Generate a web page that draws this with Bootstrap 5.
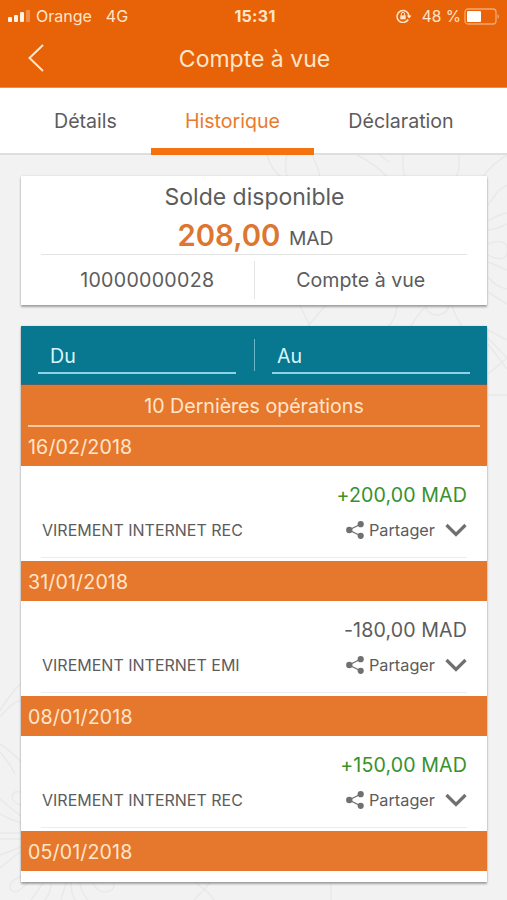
<!DOCTYPE html>
<html lang="fr">
<head>
<meta charset="utf-8">
<meta name="viewport" content="width=device-width, initial-scale=1">
<title>Compte à vue</title>
<link rel="stylesheet" href="https://cdn.jsdelivr.net/npm/bootstrap@5.3.0/dist/css/bootstrap.min.css">
<style>
body{font-family:Inter,"Liberation Sans",sans-serif;background:#f2f2f2;color:#5c5c5c;height:900px;overflow:hidden;font-size:19.6px;line-height:24px}
.backdrop{position:absolute;left:0;top:0;z-index:-1}
.app-head{background:#e86208;height:88px;color:#ffe6cb;border-bottom:1px solid #e9914f}
.status{height:32px;font-size:16px;display:grid;grid-template-columns:1fr auto 1fr}
.clock{padding-left:3px;letter-spacing:.3px}
.carrier{margin-left:5px}
.net{margin-left:14px}
.pct{margin:1px 3px 0 10px;white-space:nowrap;font-size:15.5px}
.status svg{flex:none}
.title-bar{height:53px;display:grid;grid-template-columns:61px 1fr 59px;font-size:23px}
.tabs{height:67px;background:#fff;border-bottom:2px solid #dedede}
.tabs a{color:#5c5c5c;text-decoration:none;height:67px;line-height:67px;text-align:center}
.tabs .on{color:#ea7a2c;border-bottom:7px solid #f4730e}
.t1{width:151px;padding-left:20px}.t2{width:163px}.t3{width:193px;padding-right:19px}
.panel{background:#fff;margin:0 20px 0 21px;box-shadow:0 2px 2px rgba(0,0,0,.32),0 0 2px rgba(0,0,0,.12)}
.balance{height:129px;margin-top:21px}
.sold{font-size:23px;line-height:28px;padding:7px 0 0 1px}
.sum{height:44px;margin:0 20px;border-bottom:1px solid #e4e4e4;line-height:50px;padding-left:3px}
.sum b{font-size:29.3px;font-weight:600;color:#dd7630;vertical-align:-1px}
.cur{margin-left:3px;font-size:19.3px}
.acct{margin:0 20px;height:50px}
.acct>div{width:50%;text-align:center;line-height:51px}
.acct>div:first-child{letter-spacing:.3px}
.rule-v{background:#e4e4e4;height:38px;width:1px;align-self:center}
.ops{margin-top:21px;height:556px}
.dates{background:#087891;height:59px;color:#d9f6fb;border-bottom:1px solid #4d6568;padding:0 17px 10px}
.field{border-bottom:2px solid #8bd3e6;width:198px;padding-left:12px;height:36px;line-height:37px;align-self:flex-end}
.fd{padding-left:5px}
.sepv{width:1px;height:32px;background:#69b7c9;align-self:center;margin-top:9px}
.band{background:#e6782e;color:#ffe6cb;height:39px;line-height:40px;padding-left:7px;letter-spacing:.13px}
.op+.band{height:40px;line-height:42px}
.band-top{height:42px}
.latest{text-align:center;margin:0 7px;border-bottom:2px solid #f8c9a0;height:42px;line-height:42px;letter-spacing:0}
.op{height:95px;padding:17px 20px 0}
.amt{text-align:right;line-height:25px;letter-spacing:.12px}
.plus{color:#38912b}
.line2{height:50px;font-size:16px;border-bottom:1px solid #ececec;line-height:24px;padding-bottom:5px}
.who{padding-left:1px}
.share{font-size:16.3px;margin:0 10px 0 5px}
</style>
</head>
<body>
<svg class="backdrop" width="507" height="900" fill="none" stroke="#e9e9e9" stroke-width="1.5">
 <g>
  <path d="M267 155q6 18 15 22M287 155q-3 12 0 22M312 155q6 12 8 22M357 155q20 10 30 22M403 155v12q0 6 3 12M459 155v14l-3 8M507 155q-16 10-24 22M380 155l9 7"/>
  <path d="M488 221q9-6 19-8M488 230q10-1 19-6M488 244q14-6 19 2 2 10-4 12-8 2-15-3M488 262l19 8M488 277q8 10 19 12M488 292l19 12M488 205l10-14 9-6"/>
  <path d="M300 306l10 20M325 306l-17 20M397 306q-1 12-8 20M411 326q8-14 16-20M425 306q4 10 14 9 8-2 10-9M452 306q4 12 10 20"/>
  <path d="M488 338l19 20-19 16M488 344l19 25M488 395h19M488 330l19 10"/>
 </g>
 <g>
  <path d="M21 683q-14 15-21 28M21 700q-10 3-21 17M0 744q10 6 21 18M0 752q9 10 15 22"/>
  <path d="M21 792q-8-2-9 5 1 6 9 8M0 799q9 8 21 17M0 814q10 6 21 9M0 833h21M0 839h21M0 855l21-8M0 868l21-17M21 876l-7 4q-6 5-3 10 5 4 10-1l8-7M43 883l-12 17M51 883q0 9-6 17M66 883l-5 17M71 883q0 10 4 17M80 883q1 10 8 17M93 883q4 9 12 9 10-1 9-9M196 883q14 10 18 17M210 883l-16 17M331 883v17"/>
 </g>
</svg>
<header class="app-head">
 <div class="status align-items-center">
  <div class="d-flex align-items-center ps-2"><svg width="23" height="12" viewBox="0 0 23 12"><g fill="#fff3e3"><rect y="7" width="4" height="5" rx="1"/><rect x="6" y="5" width="4" height="7" rx="1"/><rect x="12" y="2" width="4" height="10" rx="1"/><rect x="18" width="4" height="12" rx="1" opacity=".3"/></g></svg><span class="carrier">Orange</span><span class="net">4G</span></div>
  <span class="fw-bold clock">15:31</span>
  <div class="d-flex align-items-center justify-content-end pe-2"><svg width="16" height="14" viewBox="0 0 16 14" fill="none" stroke="#ffe6cb"><path d="M12.2 10.5A6 6 0 1 1 13 7" stroke-width="1.5"/><path d="M10.8 6.6h4.8l-2.4 2.8z" fill="#ffe6cb" stroke="none"/><rect x="4.3" y="6.3" width="5.4" height="4" fill="#ffe6cb" stroke="none"/><path d="M5.4 6.5V5a1.6 1.6 0 0 1 3.2 0v1.5"/></svg><span class="pct">48 %</span><svg width="35" height="17" viewBox="0 0 35 17"><rect x="1" y="1" width="31" height="15" rx="3" fill="none" stroke="#f5a873" stroke-width="1.3"/><rect x="3" y="3" width="14" height="11" rx="1" fill="#fff"/><path d="M33.5 6q3 2.5 0 5z" fill="#f5a873"/></svg></div>
 </div>
 <div class="title-bar align-items-center">
  <svg width="60" height="53" fill="none" stroke="#ffe6cb" stroke-width="2"><path d="M43 13 29.5 26 43 39"/></svg>
  <div class="text-center">Compte à vue</div>
 </div>
</header>
<nav class="tabs d-flex"><a class="t1" href="#">Détails</a><a class="t2 on" href="#">Historique</a><a class="t3" href="#">Déclaration</a></nav>
<section class="panel balance">
 <div class="sold text-center">Solde disponible</div>
 <div class="sum text-center"><b>208,00</b> <span class="cur">MAD</span></div>
 <div class="acct d-flex"><div>10000000028</div><i class="rule-v"></i><div>Compte à vue</div></div>
</section>
<svg class="d-none"><symbol id="share" viewBox="0 0 18 18"><path d="M15 3 3 9l12 6" fill="none" stroke="#707070" stroke-width="1.3"/><g fill="#707070"><circle cx="14.7" cy="3.2" r="3.1"/><circle cx="3.3" cy="9" r="3.2"/><circle cx="14.7" cy="14.8" r="3.1"/></g></symbol>
<symbol id="chev" viewBox="0 0 22 14"><path d="M1.5 2l9.500 9.500L20.500 2" fill="none" stroke="#707070" stroke-width="3.2"/></symbol></svg>
<section class="panel ops">
 <div class="dates d-flex justify-content-between"><div class="field">Du</div><i class="sepv"></i><div class="field fd">Au</div></div>
 <div class="band band-top p-0"><div class="latest">10 Dernières opérations</div></div>
 <div class="band">16/02/2018</div>
 <div class="op"><div class="amt plus">+200,00 MAD</div><div class="line2 d-flex align-items-center"><span class="who me-auto">VIREMENT INTERNET REC</span><svg width="18" height="18"><use href="#share"/></svg><span class="share">Partager</span><svg width="22" height="14"><use href="#chev"/></svg></div></div>
 <div class="band">31/01/2018</div>
 <div class="op"><div class="amt">-180,00 MAD</div><div class="line2 d-flex align-items-center"><span class="who me-auto">VIREMENT INTERNET EMI</span><svg width="18" height="18"><use href="#share"/></svg><span class="share">Partager</span><svg width="22" height="14"><use href="#chev"/></svg></div></div>
 <div class="band">08/01/2018</div>
 <div class="op"><div class="amt plus">+150,00 MAD</div><div class="line2 d-flex align-items-center"><span class="who me-auto">VIREMENT INTERNET REC</span><svg width="18" height="18"><use href="#share"/></svg><span class="share">Partager</span><svg width="22" height="14"><use href="#chev"/></svg></div></div>
 <div class="band">05/01/2018</div>
</section>
</body>
</html>
